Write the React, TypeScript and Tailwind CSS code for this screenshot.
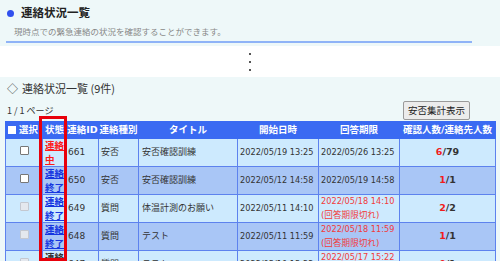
const rows = [
  { id: "661", status: "連絡中", statusColor: "text-[#ff1a1a]", kind: "安否", title: "安否確認訓練", start: "2022/05/19 13:25", end: "2022/05/26 13:25", expired: false, ok: "6", total: "79", enabled: true },
  { id: "650", status: "連絡終了", statusColor: "text-[#1636e0]", kind: "安否", title: "安否確認訓練", start: "2022/05/12 14:58", end: "2022/05/19 14:58", expired: false, ok: "1", total: "1", enabled: true },
  { id: "649", status: "連絡終了", statusColor: "text-[#1636e0]", kind: "質問", title: "体温計測のお願い", start: "2022/05/11 14:10", end: "2022/05/18 14:10", expired: true, ok: "2", total: "2", enabled: false },
  { id: "648", status: "連絡終了", statusColor: "text-[#1636e0]", kind: "質問", title: "テスト", start: "2022/05/11 11:59", end: "2022/05/18 11:59", expired: true, ok: "1", total: "1", enabled: false },
  { id: "647", status: "連絡終了", statusColor: "text-[#333]", kind: "質問", title: "テスト", start: "2022/05/10 15:22", end: "2022/05/17 15:22", expired: true, ok: "0", total: "1", enabled: false },
]

function Box({ enabled }: { enabled: boolean }) {
  return (
    <span
      className={
        enabled
          ? "inline-block w-[9px] h-[9px] bg-white border border-[#777] rounded-[1px]"
          : "inline-block w-[9px] h-[9px] bg-[#e4e8ee] border border-[#c4c8d0] rounded-[1px]"
      }
    />
  )
}

export default function App() {
  return (
    <div className="w-[500px] min-h-screen bg-[#eef8f9] text-[#333] font-['DejaVu_Sans','Noto_Sans_CJK_JP',sans-serif]">
      {/* page header */}
      <div className="pl-[6px] pr-[28px] pt-[4px]">
        <div className="border-b-[2px] border-[#8fb3f7] pb-[4px]">
          <div className="flex items-center gap-[7px] h-[18px]">
            <span className="w-[7px] h-[7px] rounded-full bg-[#3050ee] ml-[1px]" />
            <span className="text-[11.5px] font-bold text-[#222] font-['Noto_Sans_CJK_JP',sans-serif]">連絡状況一覧</span>
          </div>
          <div className="mt-[3px] pl-[8px] text-[8.5px] leading-[12px] text-[#888] font-['Noto_Sans_CJK_JP',sans-serif]">
            現時点での緊急連絡の状況を確認することができます。
          </div>
        </div>
      </div>

      {/* omitted content marker */}
      <div className="mt-[3px] h-[31px] bg-white flex flex-col items-center justify-center gap-[6px]">
        <span className="w-[2px] h-[2px] bg-[#555]" />
        <span className="w-[2px] h-[2px] bg-[#555]" />
        <span className="w-[2px] h-[2px] bg-[#555]" />
      </div>

      {/* list section */}
      <div className="px-[5px]">
        <div className="pt-[2px] h-[20px] flex items-center gap-[4px] pl-[2px] text-[11px] text-[#333] font-['Noto_Sans_CJK_JP',sans-serif]">
          <span>◇</span>
          <span>連絡状況一覧 (9件)</span>
        </div>
        <div className="mt-[4px] flex items-center justify-between pr-[25px] h-[19px]">
          <span className="pl-[2px] text-[9px] text-[#333] font-['Noto_Sans_CJK_JP',sans-serif]">1 / 1 ページ</span>
          <button className="h-[19px] px-[4px] bg-[#ececec] border border-[#9a9a9a] rounded-[2px] text-[9.5px] text-[#222] font-['Noto_Sans_CJK_JP',sans-serif]">
            安否集計表示
          </button>
        </div>

        <div className="relative mt-[1px]">
          <table className="table-fixed border-collapse w-[490px] text-[9px]">
            <colgroup>
              <col className="w-[37px]" />
              <col className="w-[24px]" />
              <col className="w-[32px]" />
              <col className="w-[40px]" />
              <col className="w-[99px]" />
              <col className="w-[81px]" />
              <col className="w-[81px]" />
              <col className="w-[96px]" />
            </colgroup>
            <thead>
              <tr className="bg-[#3a6af2] text-white h-[17px] text-[9.5px] font-bold">
                <th className="border border-[#3a6af2] px-[2px] text-left">
                  <span className="flex items-center gap-[3px]">
                    <span className="inline-block w-[8px] h-[8px] bg-white" />
                    選択
                  </span>
                </th>
                <th className="border border-[#3a6af2] p-0 whitespace-nowrap">状態</th>
                <th className="border border-[#3a6af2] p-0 whitespace-nowrap">連絡ID</th>
                <th className="border border-[#3a6af2] p-0 whitespace-nowrap">連絡種別</th>
                <th className="border border-[#3a6af2] p-0">タイトル</th>
                <th className="border border-[#3a6af2] p-0">開始日時</th>
                <th className="border border-[#3a6af2] p-0">回答期限</th>
                <th className="border border-[#3a6af2] p-0 whitespace-nowrap">確認人数/連絡先人数</th>
              </tr>
            </thead>
            <tbody>
              {rows.map((r, i) => (
                <tr key={r.id} className={i % 2 === 0 ? "bg-[#cdeafe]" : "bg-[#a9c6f6]"}>
                  <td className="border border-[#5d82ee] text-center align-middle">
                    <Box enabled={r.enabled} />
                  </td>
                  <td className="border border-[#5d82ee] px-[2px] py-0 leading-[13.5px] text-[9.5px] font-bold">
                    <a className={`underline ${r.statusColor}`}>{r.status}</a>
                  </td>
                  <td className="border border-[#5d82ee] pl-[1px]">{r.id}</td>
                  <td className="border border-[#5d82ee] pl-[2px]">{r.kind}</td>
                  <td className="border border-[#5d82ee] pl-[3px]">{r.title}</td>
                  <td className="border border-[#5d82ee] pl-[2px] whitespace-nowrap text-[8.2px]">{r.start}</td>
                  <td className="border border-[#5d82ee] pl-[2px] whitespace-nowrap leading-[13.5px] text-[8.2px]">
                    {r.expired ? (
                      <span className="text-[#f23a3a]">
                        {r.end}
                        <br />
                        <span className="text-[8.6px]">(回答期限切れ)</span>
                      </span>
                    ) : (
                      r.end
                    )}
                  </td>
                  <td className="border border-[#5d82ee] text-center font-bold text-[9.5px]">
                    <span className="text-[#f21c1c]">{r.ok}</span>/{r.total}
                  </td>
                </tr>
              ))}
            </tbody>
          </table>
          {/* annotation frame */}
          <div className="absolute left-[34px] top-[-5px] w-[28px] h-[145px] border-[3px] border-[#e8000b] pointer-events-none" />
        </div>
      </div>
    </div>
  )
}
